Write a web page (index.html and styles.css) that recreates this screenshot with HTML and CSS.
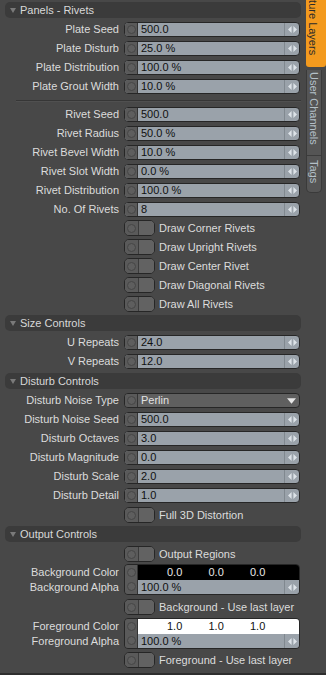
FILE: index.html
```html
<!DOCTYPE html>
<html>
<head>
<meta charset="utf-8">
<link rel="stylesheet" href="styles.css">
</head>
<body>
<div class="app">
  <div class="panel">
    <div class="head"><span class="tri"></span>Panels - Rivets</div>

    <div class="row"><span class="lbl">Plate Seed</span><div class="field"><span class="key"><i></i></span><span class="val">500.0</span><span class="spin"><svg viewBox="0 0 10 10"><path d="M4 1L0 5L4 9Z M6 1L10 5L6 9Z"/></svg></span></div></div>
    <div class="row"><span class="lbl">Plate Disturb</span><div class="field"><span class="key"><i></i></span><span class="val">25.0 %</span><span class="spin"><svg viewBox="0 0 10 10"><path d="M4 1L0 5L4 9Z M6 1L10 5L6 9Z"/></svg></span></div></div>
    <div class="row"><span class="lbl">Plate Distribution</span><div class="field"><span class="key"><i></i></span><span class="val">100.0 %</span><span class="spin"><svg viewBox="0 0 10 10"><path d="M4 1L0 5L4 9Z M6 1L10 5L6 9Z"/></svg></span></div></div>
    <div class="row"><span class="lbl">Plate Grout Width</span><div class="field"><span class="key"><i></i></span><span class="val">10.0 %</span><span class="spin"><svg viewBox="0 0 10 10"><path d="M4 1L0 5L4 9Z M6 1L10 5L6 9Z"/></svg></span></div></div>

    <div class="sep"></div>

    <div class="row"><span class="lbl">Rivet Seed</span><div class="field"><span class="key"><i></i></span><span class="val">500.0</span><span class="spin"><svg viewBox="0 0 10 10"><path d="M4 1L0 5L4 9Z M6 1L10 5L6 9Z"/></svg></span></div></div>
    <div class="row"><span class="lbl">Rivet Radius</span><div class="field"><span class="key"><i></i></span><span class="val">50.0 %</span><span class="spin"><svg viewBox="0 0 10 10"><path d="M4 1L0 5L4 9Z M6 1L10 5L6 9Z"/></svg></span></div></div>
    <div class="row"><span class="lbl">Rivet Bevel Width</span><div class="field"><span class="key"><i></i></span><span class="val">10.0 %</span><span class="spin"><svg viewBox="0 0 10 10"><path d="M4 1L0 5L4 9Z M6 1L10 5L6 9Z"/></svg></span></div></div>
    <div class="row"><span class="lbl">Rivet Slot Width</span><div class="field"><span class="key"><i></i></span><span class="val">0.0 %</span><span class="spin"><svg viewBox="0 0 10 10"><path d="M4 1L0 5L4 9Z M6 1L10 5L6 9Z"/></svg></span></div></div>
    <div class="row"><span class="lbl">Rivet Distribution</span><div class="field"><span class="key"><i></i></span><span class="val">100.0 %</span><span class="spin"><svg viewBox="0 0 10 10"><path d="M4 1L0 5L4 9Z M6 1L10 5L6 9Z"/></svg></span></div></div>
    <div class="row"><span class="lbl">No. Of Rivets</span><div class="field"><span class="key"><i></i></span><span class="val">8</span><span class="spin"><svg viewBox="0 0 10 10"><path d="M4 1L0 5L4 9Z M6 1L10 5L6 9Z"/></svg></span></div></div>

    <div class="crow first"><span class="toggle"><span class="key"><i></i></span><span class="tb"></span></span><span class="clbl">Draw Corner Rivets</span></div>
    <div class="crow"><span class="toggle"><span class="key"><i></i></span><span class="tb"></span></span><span class="clbl">Draw Upright Rivets</span></div>
    <div class="crow"><span class="toggle"><span class="key"><i></i></span><span class="tb"></span></span><span class="clbl">Draw Center Rivet</span></div>
    <div class="crow"><span class="toggle"><span class="key"><i></i></span><span class="tb"></span></span><span class="clbl">Draw Diagonal Rivets</span></div>
    <div class="crow"><span class="toggle"><span class="key"><i></i></span><span class="tb"></span></span><span class="clbl">Draw All Rivets</span></div>

    <div class="head"><span class="tri"></span>Size Controls</div>
    <div class="row"><span class="lbl">U Repeats</span><div class="field"><span class="key"><i></i></span><span class="val">24.0</span><span class="spin"><svg viewBox="0 0 10 10"><path d="M4 1L0 5L4 9Z M6 1L10 5L6 9Z"/></svg></span></div></div>
    <div class="row"><span class="lbl">V Repeats</span><div class="field"><span class="key"><i></i></span><span class="val">12.0</span><span class="spin"><svg viewBox="0 0 10 10"><path d="M4 1L0 5L4 9Z M6 1L10 5L6 9Z"/></svg></span></div></div>

    <div class="head"><span class="tri"></span>Disturb Controls</div>
    <div class="row"><span class="lbl">Disturb Noise Type</span><div class="field drop"><span class="key"><i></i></span><span class="val">Perlin</span><span class="arrow"><svg viewBox="0 0 10 6"><path d="M0 0H10L5 6Z"/></svg></span></div></div>
    <div class="row"><span class="lbl">Disturb Noise Seed</span><div class="field"><span class="key"><i></i></span><span class="val">500.0</span><span class="spin"><svg viewBox="0 0 10 10"><path d="M4 1L0 5L4 9Z M6 1L10 5L6 9Z"/></svg></span></div></div>
    <div class="row"><span class="lbl">Disturb Octaves</span><div class="field"><span class="key"><i></i></span><span class="val">3.0</span><span class="spin"><svg viewBox="0 0 10 10"><path d="M4 1L0 5L4 9Z M6 1L10 5L6 9Z"/></svg></span></div></div>
    <div class="row"><span class="lbl">Disturb Magnitude</span><div class="field"><span class="key"><i></i></span><span class="val">0.0</span><span class="spin"><svg viewBox="0 0 10 10"><path d="M4 1L0 5L4 9Z M6 1L10 5L6 9Z"/></svg></span></div></div>
    <div class="row"><span class="lbl">Disturb Scale</span><div class="field"><span class="key"><i></i></span><span class="val">2.0</span><span class="spin"><svg viewBox="0 0 10 10"><path d="M4 1L0 5L4 9Z M6 1L10 5L6 9Z"/></svg></span></div></div>
    <div class="row"><span class="lbl">Disturb Detail</span><div class="field"><span class="key"><i></i></span><span class="val">1.0</span><span class="spin"><svg viewBox="0 0 10 10"><path d="M4 1L0 5L4 9Z M6 1L10 5L6 9Z"/></svg></span></div></div>
    <div class="crow"><span class="toggle"><span class="key"><i></i></span><span class="tb"></span></span><span class="clbl">Full 3D Distortion</span></div>

    <div class="head"><span class="tri"></span>Output Controls</div>
    <div class="crow tight"><span class="toggle"><span class="key"><i></i></span><span class="tb"></span></span><span class="clbl">Output Regions</span></div>

    <div class="cblock">
      <div class="clabels"><span>Background Color</span><span>Background Alpha</span></div>
      <div class="cfield">
        <span class="ckey"><i></i><i></i></span>
        <div class="cright">
          <div class="swatch black"><span>0.0</span><span>0.0</span><span>0.0</span></div>
          <div class="alpha"><span class="val">100.0 %</span><span class="spin"><svg viewBox="0 0 10 10"><path d="M4 1L0 5L4 9Z M6 1L10 5L6 9Z"/></svg></span></div>
        </div>
      </div>
    </div>
    <div class="crow"><span class="toggle"><span class="key"><i></i></span><span class="tb"></span></span><span class="clbl">Background - Use last layer</span></div>

    <div class="cblock fg">
      <div class="clabels"><span>Foreground Color</span><span>Foreground Alpha</span></div>
      <div class="cfield">
        <span class="ckey"><i></i><i></i></span>
        <div class="cright">
          <div class="swatch white"><span>1.0</span><span>1.0</span><span>1.0</span></div>
          <div class="alpha"><span class="val">100.0 %</span><span class="spin"><svg viewBox="0 0 10 10"><path d="M4 1L0 5L4 9Z M6 1L10 5L6 9Z"/></svg></span></div>
        </div>
      </div>
    </div>
    <div class="crow"><span class="toggle"><span class="key"><i></i></span><span class="tb"></span></span><span class="clbl">Foreground - Use last layer</span></div>
  </div>

  <div class="tabs">
    <div class="tab active"><span>Texture Layers</span></div>
    <div class="tabgroup">
      <div class="tab"><span>User Channels</span></div>
      <div class="tab last"><span>Tags</span></div>
    </div>
  </div>
</div>
</body>
</html>
```

FILE: styles.css
```css
* { box-sizing: border-box; }
html, body { margin: 0; padding: 0; }
body {
  width: 326px;
  height: 675px;
  overflow: hidden;
  background: #484848;
  font-family: "Liberation Sans", Arial, sans-serif;
  font-size: 11px;
  color: #dcdcdc;
}
.app {
  display: flex;
  width: 326px;
  height: 673px;
  border-bottom: 2px solid #2e2e2e;
  box-sizing: content-box;
}
.panel {
  width: 303px;
  padding: 2px 2px 0 5px;
  display: flex;
  flex-direction: column;
}
.head {
  height: 16px;
  margin-bottom: 4px;
  background: #3b3b3b;
  border-radius: 5px;
  display: flex;
  align-items: center;
  padding-left: 5px;
  color: #d8d8d8;
  line-height: 16px;
}
.tri {
  width: 0; height: 0;
  border-left: 3px solid transparent;
  border-right: 3px solid transparent;
  border-top: 5px solid #7a7a7a;
  margin-right: 4px;
}
.row {
  display: grid;
  grid-template-columns: 114px 176px;
  column-gap: 5px;
  height: 15px;
  margin-bottom: 4px;
  align-items: center;
}
.lbl { text-align: right; white-space: nowrap; line-height: 15px; }
.field {
  display: flex;
  height: 15px;
  border: 1px solid #262626;
  border-radius: 4px;
  overflow: hidden;
  background: #9aa2aa;
}
.key {
  width: 13px;
  flex: none;
  background: #5a5a5a;
  border-right: 1px solid #333;
  display: flex;
  align-items: center;
  justify-content: center;
}
.key i, .ckey i {
  display: block;
  width: 9px; height: 9px;
  border-radius: 50%;
  border: 1px solid #464646;
  background: #5e5e5e;
}
.val {
  flex: 1;
  color: #101010;
  padding-left: 3px;
  line-height: 13px;
  white-space: nowrap;
}
.spin {
  width: 15px;
  flex: none;
  border-left: 1px solid #80888f;
  display: flex;
  align-items: center;
  justify-content: center;
}
.spin svg { width: 9px; height: 9px; fill: #dde3e8; }
.drop { background: #5f5f5f; }
.drop .val { color: #e2e2e2; }
.arrow { width: 16px; display: flex; align-items: center; justify-content: center; }
.arrow svg { width: 9px; height: 6px; fill: #e6e6e6; }

.sep {
  height: 7px;
  margin: 2px 0 0 11px;
  border-top: 1px solid #363636;
  box-shadow: inset 0 1px 0 #505050;
}

.crow {
  display: flex;
  align-items: center;
  height: 16px;
  margin-bottom: 3px;
  padding-left: 119px;
}
.crow.first { margin-top: -1px; }
.crow.tight { margin-bottom: 2px; }
.toggle {
  display: flex;
  width: 31px;
  height: 16px;
  border: 1px solid #262626;
  border-radius: 5px;
  overflow: hidden;
  background: #5e5e5e;
}
.toggle .key { width: 14px; border-right: 1px solid #3a3a3a; }
.tb { flex: 1; background: #626262; }
.clbl { margin-left: 4px; white-space: nowrap; }

.cblock {
  display: grid;
  grid-template-columns: 114px 176px;
  column-gap: 5px;
  height: 31px;
  margin-bottom: 4px;
}
.cblock.fg { margin-bottom: 3px; }
.clabels { display: flex; flex-direction: column; text-align: right; }
.clabels span { height: 16px; line-height: 16px; white-space: nowrap; }
.clabels span + span { height: 15px; line-height: 15px; }
.cfield {
  display: flex;
  border: 1px solid #262626;
  border-radius: 4px;
  overflow: hidden;
}
.ckey {
  width: 13px;
  background: #5a5a5a;
  border-right: 1px solid #333;
  display: flex;
  flex-direction: column;
  align-items: center;
  justify-content: space-around;
}
.cright { flex: 1; display: flex; flex-direction: column; }
.swatch {
  height: 15px;
  display: grid;
  grid-template-columns: 41.5px 41.5px 41.5px;
  padding-left: 29px;
  line-height: 15px;
}
.swatch.black { background: #000; color: #e8e8e8; }
.swatch.white { background: #fff; color: #111; }
.alpha { flex: 1; display: flex; background: #9aa2aa; }
.alpha .val { line-height: 14px; }

.tabs {
  width: 23px;
  display: flex;
  flex-direction: column;
  padding-left: 3px;
  overflow: hidden;
}
.tab {
  writing-mode: vertical-rl;
  font-size: 11px;
  white-space: nowrap;
}
.tab.active {
  background: #f39a1e;
  color: #2a2a2a;
  height: 67px;
  width: 20px;
  display: flex;
  align-items: flex-end;
  justify-content: flex-end;
  border-radius: 0 0 3px 3px;
  overflow: hidden;
}
.tab.active span { padding-bottom: 12px; line-height: 14px; }
.tabgroup {
  margin-top: 3px;
  width: 16px;
  background: #555;
  border-radius: 0 0 5px 5px;
  border: 1px solid #3a3a3a;
  border-top: none;
}
.tab:not(.active) {
  color: #b4c0c8;
  line-height: 14px;
  padding: 2px 0 10px;
  border-bottom: 1px solid #3c3c3c;
}
.tab.last { border-bottom: none; padding: 4px 0 9px; }
```
